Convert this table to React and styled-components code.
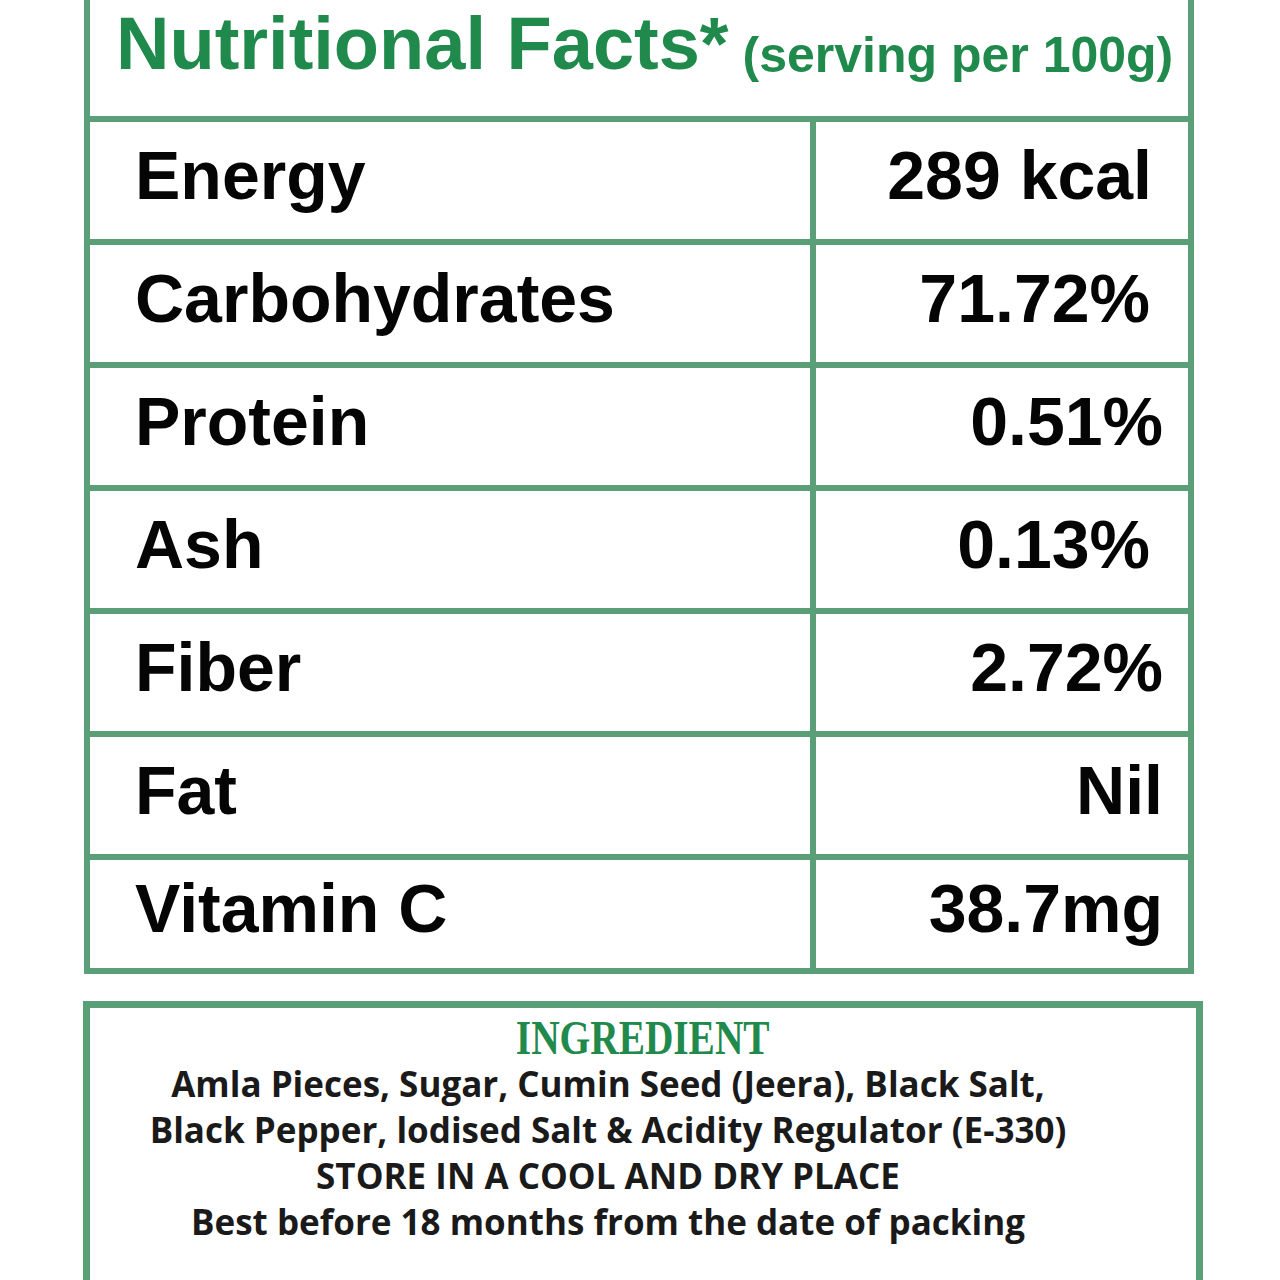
import React from 'react';
import styled, { createGlobalStyle } from 'styled-components';

const GREEN_LINE = '#5a9f78';
const GREEN_TEXT = '#1f8a4b';

const rows = [
  { label: 'Energy', value: '289 kcal', pad: 36 },
  { label: 'Carbohydrates', value: '71.72%', pad: 38 },
  { label: 'Protein', value: '0.51%', pad: 25 },
  { label: 'Ash', value: '0.13%', pad: 38 },
  { label: 'Fiber', value: '2.72%', pad: 25 },
  { label: 'Fat', value: 'Nil', pad: 25 },
  { label: 'Vitamin C', value: '38.7mg', pad: 25, short: true },
];

const ingredientLines = [
  'Amla Pieces, Sugar, Cumin Seed (Jeera), Black Salt,',
  'Black Pepper, lodised Salt & Acidity Regulator (E-330)',
  'STORE IN A COOL AND DRY PLACE',
  'Best before 18 months from the date of packing',
];

function App() {
  return (
    <>
      <GlobalStyle />
      <Page>
        <Table>
          <Header>
            <Title>
              Nutritional Facts*<Serving> (serving per 100g)</Serving>
            </Title>
          </Header>
          {rows.map((row) => (
            <Row key={row.label} $short={row.short}>
              <Label>{row.label}</Label>
              <Value $pad={row.pad}>{row.value}</Value>
            </Row>
          ))}
        </Table>

        <IngredientBox>
          <IngredientTitle>INGREDIENT</IngredientTitle>
          <Lines>
            {ingredientLines.map((line) => (
              <Line key={line}>{line}</Line>
            ))}
          </Lines>
        </IngredientBox>
      </Page>
    </>
  );
}

const GlobalStyle = createGlobalStyle`
  html, body {
    margin: 0;
    padding: 0;
    background: #ffffff;
  }
  body {
    overflow: hidden;
    height: 1280px;
  }
`;

const Page = styled.div`
  width: 1280px;
  height: 1280px;
  overflow: hidden;
  background: #fff;
  display: flex;
  flex-direction: column;
`;

const Table = styled.div`
  margin-left: 84px;
  width: 1110px;
  box-sizing: border-box;
  border-left: 6px solid ${GREEN_LINE};
  border-right: 6px solid ${GREEN_LINE};
  display: flex;
  flex-direction: column;
`;

const Header = styled.div`
  height: 115px;
  box-sizing: content-box;
  border-bottom: 6px solid ${GREEN_LINE};
  padding-left: 26px;
  padding-top: 1px;
`;

const Title = styled.h1`
  margin: 0;
  font-family: 'Liberation Sans', Arial, sans-serif;
  font-weight: 700;
  font-size: 74px;
  line-height: 1.15;
  color: ${GREEN_TEXT};
  white-space: nowrap;
`;

const Serving = styled.span`
  font-size: 50px;
  vertical-align: -3px;
`;

const Row = styled.div`
  display: grid;
  grid-template-columns: 720px 1fr;
  height: ${(p) => (p.$short ? 108 : 117)}px;
  box-sizing: content-box;
  border-bottom: 6px solid ${GREEN_LINE};
  font-family: 'Liberation Sans', Arial, sans-serif;
  font-weight: 700;
  font-size: 68px;
  color: #050505;
`;

const Label = styled.div`
  display: flex;
  align-items: center;
  padding-left: 45px;
  padding-bottom: 12px;
  white-space: nowrap;
`;

const Value = styled.div`
  display: flex;
  align-items: center;
  justify-content: flex-end;
  border-left: 6px solid ${GREEN_LINE};
  padding-right: ${(p) => p.$pad}px;
  padding-bottom: 12px;
  white-space: nowrap;
`;

const IngredientBox = styled.div`
  margin-top: 27px;
  margin-left: 83px;
  width: 1120px;
  height: 320px;
  flex-shrink: 0;
  box-sizing: border-box;
  border: 7px solid ${GREEN_LINE};
  border-bottom: none;
  padding-top: 7px;
  display: flex;
  flex-direction: column;
  align-items: center;
`;

const IngredientTitle = styled.h2`
  margin: 0;
  font-family: 'Liberation Serif', 'Times New Roman', serif;
  font-weight: 700;
  font-size: 48px;
  line-height: 46px;
  color: ${GREEN_TEXT};
  transform: scaleX(0.82);
`;

const Lines = styled.div`
  align-self: stretch;
  padding-right: 70px;
  display: flex;
  flex-direction: column;
  align-items: center;
`;

const Line = styled.div`
  font-family: 'Open Sans', 'Noto Sans', sans-serif;
  font-weight: 700;
  font-size: 35px;
  line-height: 46px;
  color: #1a1a1a;
  white-space: nowrap;
`;

export default App;
